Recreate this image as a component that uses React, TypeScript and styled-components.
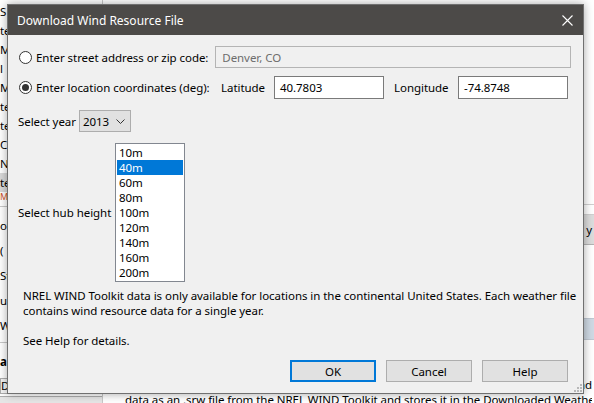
import React from 'react';
import styled, { createGlobalStyle } from 'styled-components';

const uiFont = `"Noto Sans", "Open Sans", "Liberation Sans", sans-serif`;

const GlobalStyle = createGlobalStyle`
  html, body { margin: 0; padding: 0; background: #ffffff; }
  body { font-family: ${uiFont}; font-size: 11.5px; letter-spacing: -0.05px; color: #000000; }
  * { box-sizing: border-box; }
`;

/* ---------- background app, mostly hidden by the dialog ---------- */

const Page = styled.div`
  position: relative;
  width: 594px;
  height: 403px;
  overflow: hidden;
  background: #ffffff;
`;

const Backdrop = styled.div`
  display: flex;
  height: 100%;
`;

const Sidebar = styled.div`
  width: 103px;
  flex: none;
  display: flex;
  flex-direction: column;
  border-right: 1px solid #c8c8c8;
  padding-top: 2px;
`;

const NavItem = styled.div<{ $active?: boolean; $tall?: boolean }>`
  height: ${(p) => (p.$tall ? 25 : 19)}px;
  line-height: ${(p) => (p.$tall ? 25 : 19)}px;
  white-space: nowrap;
  overflow: hidden;
  background: ${(p) => (p.$active ? '#d9d9d9' : 'transparent')};
  color: #000;
`;

const NavIconRow = styled.div`
  height: 10px;
  line-height: 10px;
  font-size: 9px;
  color: #d0532a;
  overflow: hidden;
`;

const NavDivider = styled.div`
  height: 1px;
  margin: 4px 0 6px;
  background: #c8c8c8;
`;

const SideButton = styled.div`
  margin-top: auto;
  height: 16px;
  line-height: 14px;
  width: 60px;
  border: 1px solid #adadad;
  background: #f4f4f4;
  white-space: nowrap;
  overflow: hidden;
`;

const SideFooter = styled.div`
  height: 7px;
  margin-top: 2px;
  background: #e6e6e6;
  border-top: 1px solid #adadad;
`;

const Main = styled.div`
  flex: 1;
  min-width: 0;
  overflow: hidden;
  display: flex;
  flex-direction: column;
  padding-top: 204px;
`;

const GridLine = styled.div`
  height: 11px;
  border-top: 1px solid #d0d0d0;
  border-bottom: 1px solid #d0d0d0;
`;

const DropBand = styled.div`
  height: 30px;
  background: #dcdcdc;
  border-bottom: 1px solid #b4b4b4;
  text-align: right;
  padding-right: 2px;
  line-height: 30px;
`;

const BlueBand = styled.div`
  margin-top: 73px;
  height: 22px;
  background: #cfd9e4;
  border-top: 1px solid #c0c8d2;
  border-bottom: 1px solid #c0c8d2;
`;

const Description = styled.div`
  margin-top: auto;
  padding: 0 2px 0 22px;
  line-height: 15px;
  margin-bottom: -4px;
`;

const DescLine = styled.div<{ $right?: boolean }>`
  display: flex;
  justify-content: ${(p) => (p.$right ? 'flex-end' : 'flex-start')};
  white-space: nowrap;
  overflow: hidden;
`;

/* ---------- dialog ---------- */

const Dialog = styled.div`
  position: absolute;
  left: 7px;
  top: 4px;
  width: 577px;
  height: 390px;
  background: #f0f0f0;
  border: 1px solid #707070;
  box-shadow: 0 0 9px rgba(0, 0, 0, 0.35);
  display: flex;
  flex-direction: column;
`;

const TitleBar = styled.div`
  height: 30px;
  flex: none;
  background: #4c4a48;
  color: #ffffff;
  display: flex;
  align-items: center;
  justify-content: space-between;
  padding-left: 9px;
  font-size: 12px;
  letter-spacing: 0;
`;

const CloseButton = styled.div`
  width: 32px;
  height: 30px;
  display: flex;
  align-items: center;
  justify-content: center;
`;

const Body = styled.div`
  flex: 1;
  display: flex;
  flex-direction: column;
  padding: 11px 12px 0 10px;
`;

const Row = styled.div<{ $h: number; $mt?: number }>`
  display: flex;
  align-items: center;
  height: ${(p) => p.$h}px;
  margin-top: ${(p) => p.$mt ?? 0}px;
`;

const RadioOption = styled.label`
  width: 197px;
  display: flex;
  align-items: center;
  gap: 4px;
  margin-left: 1px;
  white-space: nowrap;
`;

const RadioCircle = styled.span<{ $checked?: boolean }>`
  width: 13px;
  height: 13px;
  border-radius: 50%;
  border: 1px solid #333333;
  background: #ffffff;
  display: flex;
  align-items: center;
  justify-content: center;
  flex: none;
  &::after {
    content: '';
    width: 7px;
    height: 7px;
    border-radius: 50%;
    background: ${(p) => (p.$checked ? '#333333' : 'transparent')};
  }
`;

const TextBox = styled.div<{ $w: number; $disabled?: boolean }>`
  width: ${(p) => p.$w}px;
  height: 100%;
  border: 1px solid ${(p) => (p.$disabled ? '#b4b4b4' : '#7a7a7a')};
  background: ${(p) => (p.$disabled ? '#f0f0f0' : '#ffffff')};
  color: ${(p) => (p.$disabled ? '#6d6d6d' : '#000000')};
  display: flex;
  align-items: center;
  padding-left: ${(p) => (p.$disabled ? 6 : 5)}px;
  white-space: nowrap;
`;

const FieldLabel = styled.span<{ $w: number; $ml?: number }>`
  width: ${(p) => p.$w}px;
  margin-left: ${(p) => p.$ml ?? 0}px;
  white-space: nowrap;
  flex: none;
`;

const YearSelect = styled.div`
  width: 52px;
  height: 100%;
  border: 1px solid #adadad;
  background: #e1e1e1;
  display: flex;
  align-items: center;
  justify-content: space-between;
  padding: 0 5px 0 3px;
`;

const ListBox = styled.div`
  width: 70px;
  height: 139px;
  border: 1px solid #828790;
  background: #ffffff;
  padding: 1px;
`;

const ListItem = styled.div<{ $selected?: boolean }>`
  height: 15px;
  line-height: 15px;
  padding-left: 2px;
  background: ${(p) => (p.$selected ? '#0078d7' : 'transparent')};
  color: ${(p) => (p.$selected ? '#ffffff' : '#000000')};
`;

const Note = styled.div`
  margin-top: 6px;
  padding-left: 5px;
  line-height: 15px;
`;

const NoteLine = styled.div`
  height: 15px;
  white-space: nowrap;
`;

const ButtonRow = styled.div`
  margin-top: 12px;
  display: flex;
  justify-content: flex-end;
  gap: 10px;
  padding-right: 3px;
`;

const Button = styled.div<{ $default?: boolean }>`
  width: 86px;
  height: 22px;
  background: #e1e1e1;
  border: ${(p) => (p.$default ? '2px solid #0078d7' : '1px solid #adadad')};
  display: flex;
  align-items: center;
  justify-content: center;
`;

const Grip = styled.svg`
  position: absolute;
  right: 1px;
  bottom: 1px;
`;

const navTop = ['S', 'te', 'M', 'l', 'M', 'te', 'te', 'C', 'N', 'te'];
const navBottom = ['ot', '(', 'St', 'ur', 'W'];
const heights = ['10m', '40m', '60m', '80m', '100m', '120m', '140m', '160m', '200m'];

export default function App() {
  return (
    <>
      <GlobalStyle />
      <Page>
        <Backdrop>
          <Sidebar>
            {navTop.map((t, i) => (
              <NavItem key={i} $active={i === 9}>{t}</NavItem>
            ))}
            <NavIconRow>M</NavIconRow>
            <NavDivider />
            {navBottom.map((t, i) => (
              <NavItem key={i} $tall>{t}</NavItem>
            ))}
            <NavDivider />
            <NavItem $tall style={{ fontWeight: 700 }}>a</NavItem>
            <SideButton>Dc</SideButton>
            <SideFooter />
          </Sidebar>
          <Main>
            <GridLine />
            <DropBand>y</DropBand>
            <BlueBand />
            <Description>
              <DescLine $right>The Download button downloads a weather file with wind resource and</DescLine>
              <DescLine>data as an .srw file from the NREL WIND Toolkit and stores it in the Downloaded Weather Files folder.</DescLine>
            </Description>
          </Main>
        </Backdrop>

        <Dialog>
          <TitleBar>
            <span>Download Wind Resource File</span>
            <CloseButton>
              <svg width="11" height="11" viewBox="0 0 11 11">
                <path d="M0.5 0.5 L10.5 10.5 M10.5 0.5 L0.5 10.5" stroke="#ffffff" strokeWidth="1.1" />
              </svg>
            </CloseButton>
          </TitleBar>
          <Body>
            <Row $h={22}>
              <RadioOption>
                <RadioCircle />
                Enter street address or zip code:
              </RadioOption>
              <TextBox $w={357} $disabled>Denver, CO</TextBox>
            </Row>
            <Row $h={23} $mt={8}>
              <RadioOption>
                <RadioCircle $checked />
                Enter location coordinates (deg):
              </RadioOption>
              <FieldLabel $w={53} $ml={5}>Latitude</FieldLabel>
              <TextBox $w={110}>40.7803</TextBox>
              <FieldLabel $w={64} $ml={10}>Longitude</FieldLabel>
              <TextBox $w={110}>-74.8748</TextBox>
            </Row>
            <Row $h={22} $mt={11}>
              <FieldLabel $w={61}>Select year</FieldLabel>
              <YearSelect>
                <span>2013</span>
                <svg width="9" height="5" viewBox="0 0 9 5">
                  <path d="M0.5 0.5 L4.5 4.5 L8.5 0.5" stroke="#333333" fill="none" strokeWidth="1" />
                </svg>
              </YearSelect>
            </Row>
            <Row $h={139} $mt={11}>
              <FieldLabel $w={97}>Select hub height</FieldLabel>
              <ListBox>
                {heights.map((h) => (
                  <ListItem key={h} $selected={h === '40m'}>{h}</ListItem>
                ))}
              </ListBox>
            </Row>
            <Note>
              <NoteLine>NREL WIND Toolkit data is only available for locations in the continental United States. Each weather file</NoteLine>
              <NoteLine>contains wind resource data for a single year.</NoteLine>
              <NoteLine />
              <NoteLine>See Help for details.</NoteLine>
            </Note>
            <ButtonRow>
              <Button $default>OK</Button>
              <Button>Cancel</Button>
              <Button>Help</Button>
            </ButtonRow>
          </Body>
          <Grip width="8" height="8" viewBox="0 0 8 8">
            <rect x="6" y="0" width="2" height="2" fill="#b8b8b8" />
            <rect x="3" y="3" width="2" height="2" fill="#b8b8b8" />
            <rect x="6" y="3" width="2" height="2" fill="#b8b8b8" />
            <rect x="0" y="6" width="2" height="2" fill="#b8b8b8" />
            <rect x="3" y="6" width="2" height="2" fill="#b8b8b8" />
            <rect x="6" y="6" width="2" height="2" fill="#b8b8b8" />
          </Grip>
        </Dialog>
      </Page>
    </>
  );
}
